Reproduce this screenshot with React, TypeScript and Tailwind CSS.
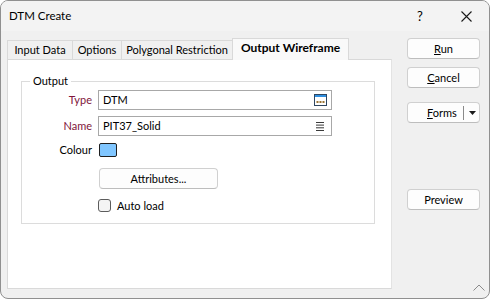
import React from 'react'

const tabs = [
  { label: 'Input Data', w: 'w-[65px]' },
  { label: 'Options', w: 'w-[49px]' },
  { label: 'Polygonal Restriction', w: 'w-[111px]' },
]

const SideButton = ({ children, className = '' }: { children: React.ReactNode; className?: string }) => (
  <button className={`h-[21px] w-[73px] flex items-center justify-center rounded-[4px] border border-[#d0d0d0] border-b-[#bdbdbd] bg-[#fdfdfd] ${className}`}>
    {children}
  </button>
)

const App = () => {
  return (
    <div className="relative w-[490px] h-[299px] flex flex-col overflow-hidden whitespace-nowrap rounded-[8px] border border-[#909090] bg-[#f0f0f0] text-[11px] leading-[16px] text-black font-['Segoe_UI',Lato,sans-serif]">
      {/* Title bar */}
      <div className="h-[30px] flex items-center bg-[#f3f3f3] pl-[8px]">
        <span className="text-[11.5px]">DTM Create</span>
        <span className="ml-auto w-[46px] text-center text-[13px]">?</span>
        <span className="w-[46px] flex justify-center">
          <svg width="11" height="11" viewBox="0 0 11 11" stroke="#1a1a1a" strokeWidth="1.1">
            <path d="M0.5 0.5l10 10M10.5 0.5l-10 10" />
          </svg>
        </span>
      </div>

      {/* Body */}
      <div className="flex-1 flex pl-[6px] pt-[7px]">
        <div className="w-[385px] flex flex-col">
          {/* Tabs */}
          <div className="h-[21px] flex items-end">
            {tabs.map((t) => (
              <div
                key={t.label}
                className={`${t.w} h-[19px] flex items-center justify-center border-l border-t border-[#d9d9d9] bg-[#f0f0f0]`}
              >
                {t.label}
              </div>
            ))}
            <div className="relative z-10 -mb-px w-[117px] h-[22px] flex items-center justify-center border border-b-0 border-[#d9d9d9] bg-[#f9f9f9] text-[12px] font-bold pb-[3px]">
              Output Wireframe
            </div>
          </div>

          {/* Panel */}
          <div className="h-[230px] border border-[#d9d9d9] border-r-[#e3e3e3] bg-white pt-[21px] pl-[13px]">
            <div className="relative w-[354px] h-[143px] border border-[#dcdcdc] flex flex-col">
              <span className="absolute left-[8px] top-[-9px] bg-white px-[3px]">Output</span>

              <div className="mt-[8px] flex items-center">
                <span className="w-[70px] text-right text-[#80153a]">Type</span>
                <div className="ml-[6px] w-[234px] h-[20px] flex items-center border border-[#a8a8a8] bg-white pl-[4px] pr-[4px]">
                  <span>DTM</span>
                  <svg className="ml-auto" width="13" height="12" viewBox="0 0 13 12">
                    <rect x="0.5" y="0.5" width="12" height="11" fill="#fff" stroke="#2f4660" />
                    <rect x="1" y="1" width="11" height="2" fill="#2f8fe0" />
                    <rect x="2.5" y="7" width="2" height="2" fill="#9a7434" />
                    <rect x="5.5" y="7" width="2" height="2" fill="#9a7434" />
                    <rect x="8.5" y="7" width="2" height="2" fill="#9a7434" />
                  </svg>
                </div>
              </div>

              <div className="mt-[6px] flex items-center">
                <span className="w-[70px] text-right text-[#80153a]">Name</span>
                <div className="ml-[6px] w-[234px] h-[20px] flex items-center border border-[#a8a8a8] bg-white pl-[4px] pr-[6px]">
                  <span>PIT37_Solid</span>
                  <svg className="ml-auto" width="9" height="9" viewBox="0 0 9 9" fill="#3a3a3a">
                    <rect x="0" y="0" width="8" height="1" />
                    <rect x="0" y="2.6" width="8" height="1" />
                    <rect x="0" y="5.3" width="8" height="1" />
                    <rect x="0" y="8" width="8" height="1" />
                  </svg>
                </div>
              </div>

              <div className="mt-[7px] h-[14px] flex items-center">
                <span className="w-[70px] text-right">Colour</span>
                <span className="ml-[7px] w-[18px] h-[14px] rounded-[2px] border border-[#1f1f1f] bg-[#80c6ff]" />
              </div>

              <div className="mt-[11px] pl-[77px]">
                <button className="w-[119px] h-[21px] flex items-center justify-center rounded-[4px] border border-[#d0d0d0] border-b-[#bdbdbd] bg-[#fdfdfd]">
                  Attributes...
                </button>
              </div>

              <label className="mt-[10px] ml-[76px] h-[13px] flex items-center gap-[6px]">
                <span className="w-[13px] h-[13px] rounded-[3px] border border-[#5c5c5c] bg-[#f4f4f4]" />
                <span>Auto load</span>
              </label>
            </div>
          </div>
        </div>

        {/* Right buttons */}
        <div className="ml-[15px] flex flex-col">
          <SideButton>
            <span><span className="underline">R</span>un</span>
          </SideButton>
          <SideButton className="mt-[8px]">
            <span><span className="underline">C</span>ancel</span>
          </SideButton>
          <SideButton className="mt-[14px] justify-start">
            <span className="ml-[19px]"><span className="underline">F</span>orms</span>
            <span className="ml-[6px] w-px h-[14px] bg-[#8a8a8a]" />
            <svg className="ml-[5px]" width="7" height="4" viewBox="0 0 7 4">
              <path d="M0 0h7L3.5 4z" fill="#1a1a1a" />
            </svg>
          </SideButton>
          <SideButton className="mt-[66px]">Preview</SideButton>
        </div>
      </div>

      {/* Size grip */}
      <svg className="absolute right-[4px] bottom-[7px]" width="12" height="7" viewBox="0 0 12 7" fill="none" stroke="#8a8a8a">
        <path d="M0.5 6.5L6 1l5.5 5.5" />
      </svg>
    </div>
  )
}

export default App
